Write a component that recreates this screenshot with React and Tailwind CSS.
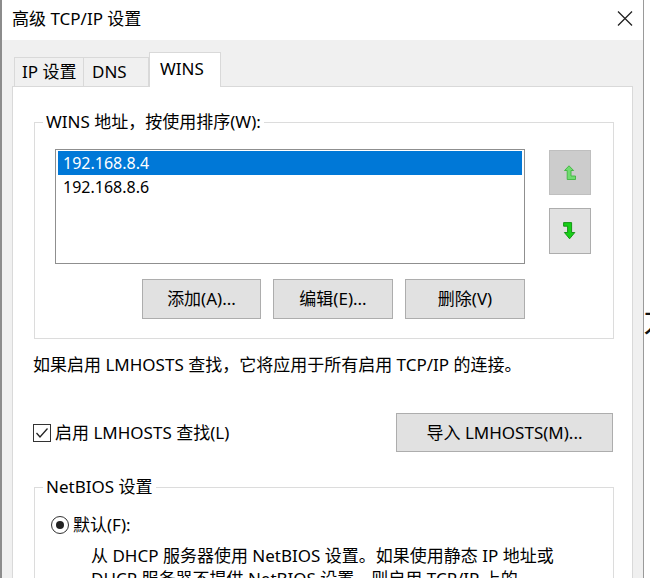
import React from "react";

const font = "font-['Noto_Sans','Noto_Sans_CJK_SC',sans-serif]";

function UpIcon() {
  return (
    <svg width="13" height="16" viewBox="0 0 13 16">
      <path
        d="M5 0.8 L9.6 5.5 L7 5.5 L7 11 L11.5 11 L11.5 14.5 L3.2 14.5 L3.2 5.5 L0.5 5.5 Z"
        fill="#6fdc6f"
        stroke="#3fb43f"
        strokeWidth="0.9"
        strokeLinejoin="round"
      />
    </svg>
  );
}

function DownIcon() {
  return (
    <svg width="14" height="18" viewBox="0 0 14 18">
      <path
        d="M0.6 0.6 L8.6 0.6 L8.6 10.5 L11.8 10.5 L6.6 16.8 L1.4 10.5 L4.6 10.5 L4.6 4.2 L0.6 4.2 Z"
        fill="#18d018"
        stroke="#0b8f0b"
        strokeWidth="0.9"
        strokeLinejoin="round"
      />
    </svg>
  );
}

function WinButton({ children, className = "" }) {
  return (
    <div
      className={`flex items-center justify-center bg-[#e1e1e1] border border-[#adadad] text-[17px] leading-[22px] text-black ${className}`}
    >
      {children}
    </div>
  );
}

export default function App() {
  return (
    <div className={`w-[650px] h-[578px] overflow-hidden bg-white flex ${font} text-black`}>
      {/* dialog window */}
      <div className="w-[644px] h-full flex flex-col border-l-2 border-l-[#8c8c8c] border-r border-r-[#9a9a9a]">
        {/* title bar */}
        <div className="h-[40px] shrink-0 bg-white flex items-center justify-between pl-[10px] pr-[10px]">
          <span className="text-[17px] leading-[22px] -mt-[3px]">高级 TCP/IP 设置</span>
          <svg width="16" height="15" viewBox="0 0 16 15" className="-mt-[3px]">
            <path d="M1 0.5 L15 14.5 M15 0.5 L1 14.5" stroke="#222" strokeWidth="1.3" />
          </svg>
        </div>

        {/* body */}
        <div className="flex-1 bg-[#f0f0f0] pt-[12px] pl-[10px] pr-[10px] flex flex-col">
          {/* tabs */}
          <div className="flex items-end h-[34px] pl-[2px] relative z-10 text-[17px] leading-[22px]">
            <div className="w-[70px] h-[29px] border border-b-0 border-[#d9d9d9] flex items-center pl-[7px]">
              IP 设置
            </div>
            <div className="w-[65px] h-[29px] border-t border-r border-[#d9d9d9] flex items-center pl-[8px]">
              DNS
            </div>
            <div className="w-[72px] h-[35px] -mb-px bg-white border border-b-0 border-[#d9d9d9] flex items-center pl-[10px] pb-[3px]">
              WINS
            </div>
          </div>

          {/* tab panel */}
          <div className="flex-1 bg-white border border-[#d9d9d9] pl-[20px] pr-[18px] pt-[24px] text-[17px] leading-[22px]">
            <fieldset className="ml-[1px] border border-[#dcdcdc]">
              <legend className="ml-[8px] px-[3px] leading-[22px]">WINS 地址，按使用排序(W):</legend>
              <div className="pl-[20px] pr-[21px] pb-[19px]">
                <div className="flex pt-[16px]">
                  <div className="w-[470px] h-[115px] border border-[#8f8f8f] p-[2px] pt-[1px] text-[16px]">
                    <div className="h-[24px] bg-[#0078d7] text-white flex items-center pl-[5px]">192.168.8.4</div>
                    <div className="h-[24px] flex items-center pl-[5px]">192.168.8.6</div>
                  </div>
                  <div className="ml-[24px] pt-[1px] flex flex-col gap-[13px]">
                    <div className="w-[42px] h-[45px] bg-[#cccccc] border border-[#bfbfbf] flex items-center justify-center">
                      <UpIcon />
                    </div>
                    <div className="w-[42px] h-[46px] bg-[#e1e1e1] border border-[#adadad] flex items-center justify-center">
                      <DownIcon />
                    </div>
                  </div>
                </div>
                <div className="w-[470px] mt-[15px] flex justify-end gap-[12px]">
                  <WinButton className="w-[119px] h-[40px]">添加(A)...</WinButton>
                  <WinButton className="w-[120px] h-[40px]">编辑(E)...</WinButton>
                  <WinButton className="w-[120px] h-[40px]">删除(V)</WinButton>
                </div>
              </div>
            </fieldset>

            <p className="mt-[15px]">如果启用 LMHOSTS 查找，它将应用于所有启用 TCP/IP 的连接。</p>

            <div className="mt-[37px] flex items-center justify-between">
              <div className="flex items-center gap-[4px]">
                <div className="w-[18px] h-[18px] border border-[#333] flex items-center justify-center">
                  <svg width="14" height="12" viewBox="0 0 14 12">
                    <path d="M1.5 6 L5 10 L12.5 1.5" fill="none" stroke="#222" strokeWidth="1.3" />
                  </svg>
                </div>
                <span>启用 LMHOSTS 查找(L)</span>
              </div>
              <WinButton className="w-[217px] h-[39px] mr-[1px]">导入 LMHOSTS(M)...</WinButton>
            </div>

            <fieldset className="mt-[24px] ml-[1px] border border-[#dcdcdc] border-b-0 h-[120px]">
              <legend className="ml-[8px] px-[3px] leading-[22px]">NetBIOS 设置</legend>
              <div className="pl-[16px] pr-[10px]">
                <div className="pt-[16px] flex items-center gap-[4px]">
                  <div className="w-[18px] h-[18px] rounded-full border border-[#333] flex items-center justify-center">
                    <div className="w-[8px] h-[8px] rounded-full bg-[#222]" />
                  </div>
                  <span>默认(F):</span>
                </div>
                <p className="mt-[8px] pl-[40px] leading-[23px] whitespace-nowrap">
                  从 DHCP 服务器使用 NetBIOS 设置。如果使用静态 IP 地址或
                  <br />
                  DHCP 服务器不提供 NetBIOS 设置，则启用 TCP/IP 上的
                  <br />
                  NetBIOS。
                </p>
              </div>
            </fieldset>
          </div>
        </div>
      </div>

      {/* background window edge */}
      <div className="w-[6px] overflow-hidden pt-[300px]">
        <div className="text-[30px] leading-[36px] text-[#111] ml-[-1px] font-['Noto_Sans_CJK_SC',sans-serif]">力</div>
      </div>
    </div>
  );
}
